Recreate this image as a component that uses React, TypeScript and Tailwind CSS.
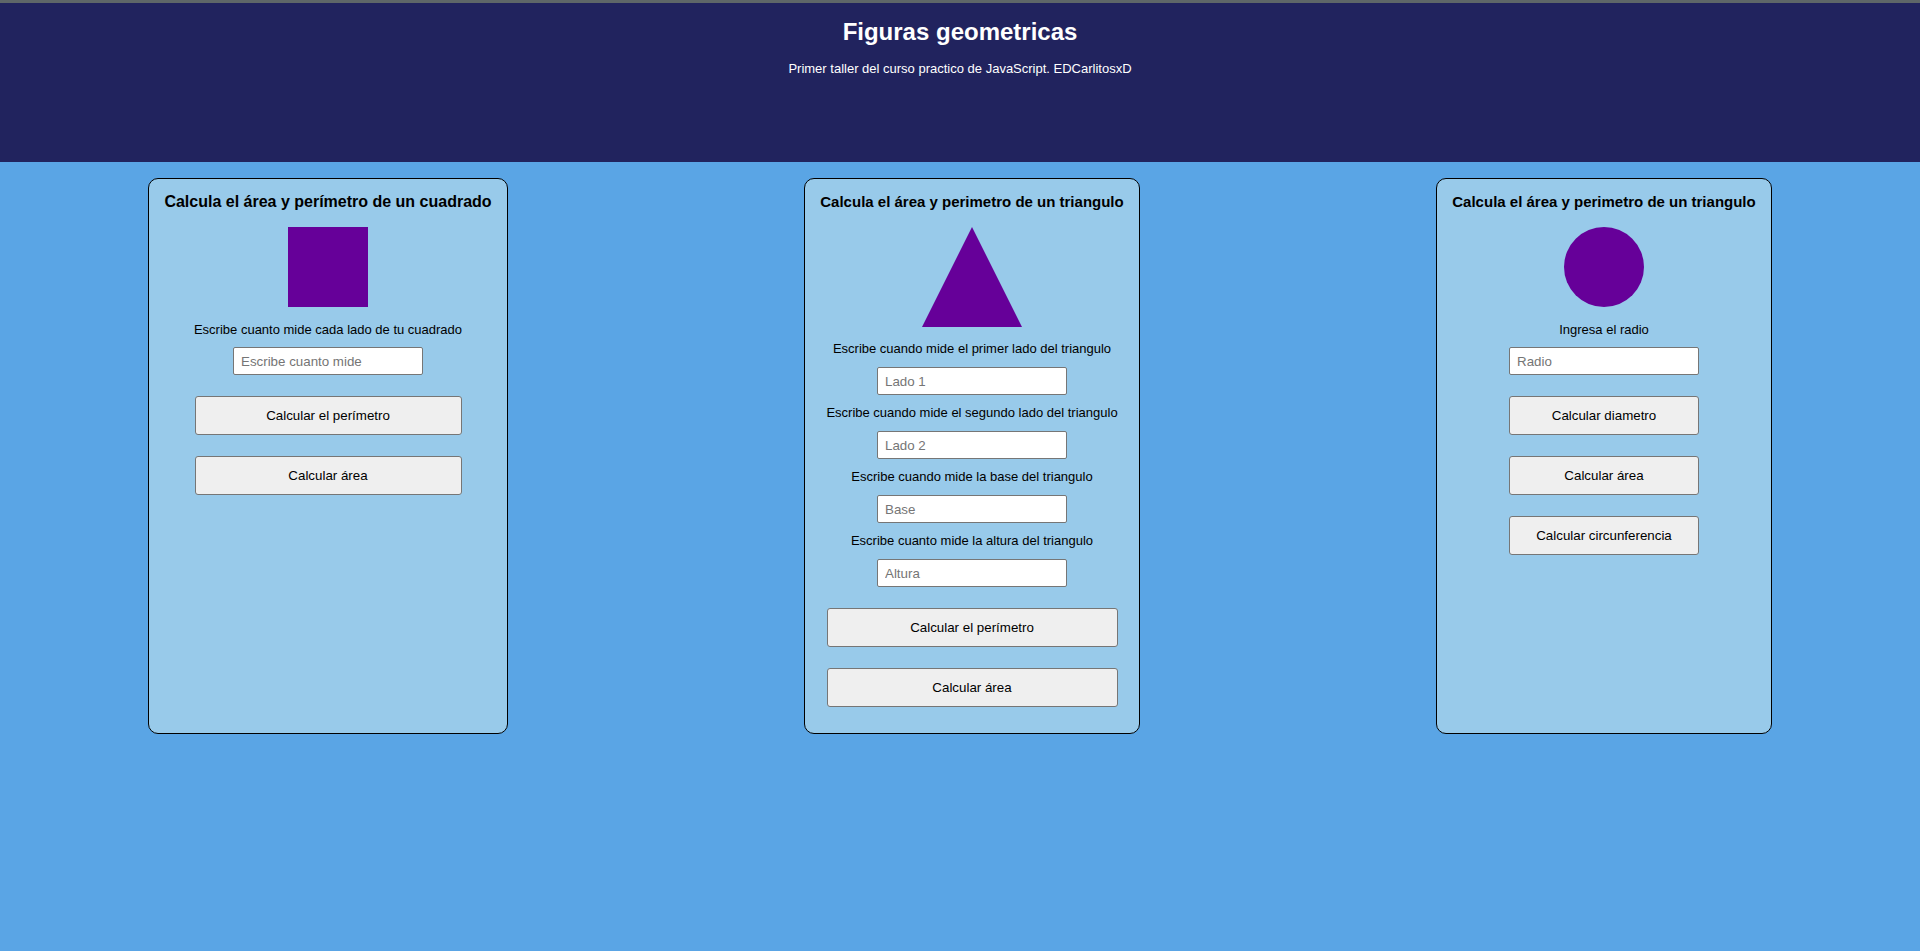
const figuraColor = "bg-[#660099]";

function Label({ children, mt = "mt-[10px]" }: { children: string; mt?: string }) {
  return <p className={`${mt} text-[13px] leading-[16px] text-black`}>{children}</p>;
}

function Field({ placeholder, mt = "mt-[10px]" }: { placeholder: string; mt?: string }) {
  return (
    <input
      type="text"
      placeholder={placeholder}
      className={`${mt} h-[28px] w-[190px] rounded-[2px] border border-[#767676] bg-white px-[7px] text-[13.33px] text-black placeholder:text-[#757575]`}
    />
  );
}

function Boton({ children, width }: { children: string; width: string }) {
  return (
    <button
      type="button"
      className={`mt-[21px] h-[39px] ${width} rounded-[3px] border border-[#767676] bg-[#efefef] text-[13.33px] text-black`}
    >
      {children}
    </button>
  );
}

function Card({
  width,
  title,
  titleSize,
  children,
}: {
  width: string;
  title: string;
  titleSize: string;
  children: React.ReactNode;
}) {
  return (
    <section
      className={`flex ${width} flex-col items-center rounded-[10px] border border-black bg-[#98caea] px-1 pt-[14px] pb-[26px] text-center`}
    >
      <h2 className={`${titleSize} font-bold leading-[18px] whitespace-nowrap text-black`}>{title}</h2>
      {children}
    </section>
  );
}

export default function App() {
  return (
    <div className="min-h-screen bg-[#5aa5e5] font-['Liberation_Sans',Arial,sans-serif]">
      <header className="h-[162px] border-t-[3px] border-[#5e6668] bg-[#21235e] pt-[15px] text-center text-white">
        <h1 className="text-[24px] font-bold leading-[28px]">Figuras geometricas</h1>
        <p className="mt-[15px] text-[13px] leading-[15px]">
          Primer taller del curso practico de JavaScript. EDCarlitosxD
        </p>
      </header>

      <main className="flex items-stretch justify-around pt-[16px]">
        {/* Cuadrado */}
        <Card width="w-[360px]" titleSize="text-[16px]" title="Calcula el área y perímetro de un cuadrado">
          <div className={`mt-[16px] h-[80px] w-[80px] ${figuraColor}`} />
          <Label mt="mt-[15px]">Escribe cuanto mide cada lado de tu cuadrado</Label>
          <Field placeholder="Escribe cuanto mide" mt="mt-[9px]" />
          <Boton width="w-[267px]">Calcular el perímetro</Boton>
          <Boton width="w-[267px]">Calcular área</Boton>
        </Card>

        {/* Triangulo */}
        <Card width="w-[336px]" titleSize="text-[15px]" title="Calcula el área y perimetro de un triangulo">
          <div className="mt-[16px] h-0 w-0 border-r-[50px] border-b-[100px] border-l-[50px] border-r-transparent border-b-[#660099] border-l-transparent" />
          <Label mt="mt-[14px]">Escribe cuando mide el primer lado del triangulo</Label>
          <Field placeholder="Lado 1" />
          <Label>Escribe cuando mide el segundo lado del triangulo</Label>
          <Field placeholder="Lado 2" />
          <Label>Escribe cuando mide la base del triangulo</Label>
          <Field placeholder="Base" />
          <Label>Escribe cuanto mide la altura del triangulo</Label>
          <Field placeholder="Altura" />
          <Boton width="w-[291px]">Calcular el perímetro</Boton>
          <Boton width="w-[291px]">Calcular área</Boton>
        </Card>

        {/* Circulo */}
        <Card width="w-[336px]" titleSize="text-[15px]" title="Calcula el área y perimetro de un triangulo">
          <div className={`mt-[16px] h-[80px] w-[80px] rounded-full ${figuraColor}`} />
          <Label mt="mt-[15px]">Ingresa el radio</Label>
          <Field placeholder="Radio" mt="mt-[9px]" />
          <Boton width="w-[190px]">Calcular diametro</Boton>
          <Boton width="w-[190px]">Calcular área</Boton>
          <Boton width="w-[190px]">Calcular circunferencia</Boton>
        </Card>
      </main>
    </div>
  );
}
